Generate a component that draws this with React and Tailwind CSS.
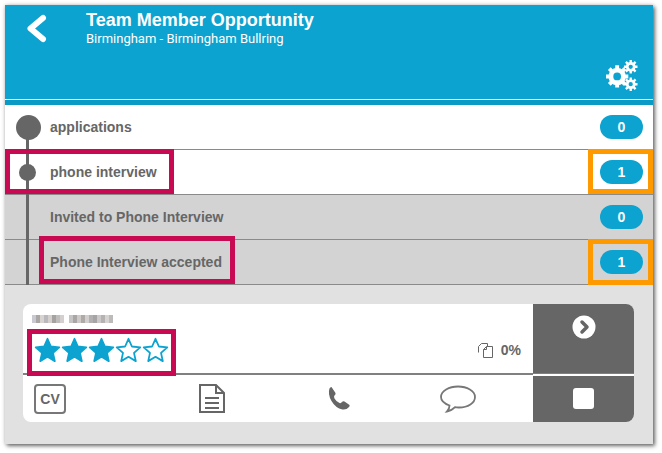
function Gears() {
  return (
    <svg width="34" height="31" viewBox="0 0 34 32" fill="none">
      <g stroke="#fff">
        <circle cx="12" cy="17" r="6.5" strokeWidth="5" />
        <path d="M12 5.500v4M12 24.500v4M.5 17h4M19.500 17h4M3.900 8.900l2.800 2.800M17.300 22.300l2.800 2.800M3.900 25.100l2.800-2.800M17.300 11.700l2.800-2.800" strokeWidth="4" />
        <circle cx="26" cy="7" r="3.600" strokeWidth="2.800" />
        <path d="M26 0v3M26 11v3M19 7h3M30 7h3M21 2l2 2M29 10l2 2M21 12l2-2M29 4l2-2" strokeWidth="2.400" />
        <circle cx="26" cy="25" r="3.600" strokeWidth="2.800" />
        <path d="M26 18v3M26 29v3M19 25h3M30 25h3M21 20l2 2M29 28l2 2M21 30l2-2M29 22l2-2" strokeWidth="2.400" />
      </g>
    </svg>
  );
}

function Star({ filled }) {
  return (
    <svg width="27" height="26" viewBox="0 0 27 26">
      <path
        d="M13.500 1.800l3.400 7.700 8.400.8-6.300 5.600 1.800 8.200-7.300-4.300-7.300 4.300 1.800-8.200-6.300-5.600 8.400-.8z"
        fill={filled ? "#0ca3d0" : "#fff"}
        stroke="#0ca3d0"
        strokeWidth="1.800"
        strokeLinejoin="round"
      />
    </svg>
  );
}

function Badge({ n }) {
  return (
    <span className="flex h-6 w-[43px] items-center justify-center rounded-full bg-[#0ca3d0] text-sm font-bold text-white">
      {n}
    </span>
  );
}

function Row({ label, n, sub }) {
  return (
    <div
      className={`flex h-[45px] items-center justify-between border-b border-[#8a8a8a] pl-[45px] pr-[10px] ${
        sub ? "bg-[#d3d3d3]" : "bg-white"
      }`}
    >
      <span className="text-sm font-bold text-[#666]">{label}</span>
      <Badge n={n} />
    </div>
  );
}

// the name is pixelated in the picture
const mosaicA = ["bg-[#c9c9cf]", "bg-[#a9a6a6]", "bg-[#d8d3cf]", "bg-[#b9b9bd]", "bg-[#d5d0ce]", "bg-[#a5a2a2]", "bg-[#c0bcbc]", "bg-[#d4d0cf]"];
const mosaicB = ["bg-[#c8c4c4]", "bg-[#a8a6a8]", "bg-[#cfcac6]", "bg-[#aeaaaa]", "bg-[#d2cfcc]", "bg-[#b2b0b0]", "bg-[#a6a4a4]", "bg-[#cdc9c9]", "bg-[#b4b2b2]", "bg-[#d6d3d0]", "bg-[#bcbaba]"];

export default function App() {
  return (
    <div className="h-[453px] w-[662px] bg-white pt-[5px] pl-[5px] font-['Liberation_Sans',sans-serif]">
      <div className="relative h-[439px] w-[648px] bg-[#e1e1e1] shadow-[2px_2px_4px_rgba(0,0,0,0.55),0_0_4px_rgba(0,0,0,0.2)]">
        {/* header */}
        <div className="flex h-[94px] bg-[#0ca3d0] pl-[21px] pt-[5px]">
          <svg width="22" height="30" viewBox="0 0 22 30" className="mt-[4px]">
            <path d="M17 4L4.500 14.500 17 25" fill="none" stroke="#fff" strokeWidth="6" strokeLinecap="round" strokeLinejoin="round" />
          </svg>
          <div className="ml-[38px] flex flex-col">
            <span className="text-lg leading-[20px] font-bold text-white">Team Member Opportunity</span>
            <span className="font-['Roboto',sans-serif] text-[13px] leading-[17px] text-white">
              Birmingham - Birmingham Bullring
            </span>
          </div>
          <div className="absolute top-[55px] right-[14px]">
            <Gears />
          </div>
        </div>
        <div className="h-px bg-white" />
        <div className="h-[5px] bg-[#0a9ac4]" />

        {/* stages */}
        <div className="relative">
          <Row label="applications" n="0" />
          <Row label="phone interview" n="1" />
          <Row label="Invited to Phone Interview" n="0" sub />
          <Row label="Phone Interview accepted" n="1" sub />
          <div className="absolute top-[20px] bottom-0 left-[21px] w-[3px] bg-[#666]" />
          <div className="absolute top-[10px] left-[11px] h-[25px] w-[25px] rounded-full bg-[#666]" />
          <div className="absolute top-[59px] left-[14px] h-[17px] w-[17px] rounded-full bg-[#666]" />

          {/* annotations */}
          <div className="absolute top-[44px] left-0 h-[45px] w-[169px] border-[5px] border-[#c70a52]" />
          <div className="absolute top-[131px] left-[34px] h-[48px] w-[196px] border-[5px] border-[#c70a52]" />
          <div className="absolute top-[44px] right-0 h-[45px] w-[65px] border-[5px] border-[#ff9900]" />
          <div className="absolute top-[134px] right-0 h-[46px] w-[65px] border-[5px] border-[#ff9900]" />
        </div>

        {/* candidate card */}
        <div className="absolute top-[299px] left-[18px] flex h-[118px] w-[611px] flex-col overflow-hidden rounded-lg bg-white">
          <div className="flex h-[71px] border-b-2 border-[#808080]">
            <div className="relative flex-1 pl-[11px]">
              <div className="mt-[11px] -ml-[2px] flex h-[8px] gap-[5px] blur-[0.6px]">
                <div className="flex">
                  {mosaicA.map((c, i) => (
                    <span key={i} className={`h-[8px] w-[4px] ${c}`} />
                  ))}
                </div>
                <div className="flex">
                  {mosaicB.map((c, i) => (
                    <span key={i} className={`h-[8px] w-[4px] ${c}`} />
                  ))}
                </div>
              </div>
              <div className="mt-[14px] flex">
                <Star filled />
                <Star filled />
                <Star filled />
                <Star />
                <Star />
              </div>
              <div className="absolute right-[12px] bottom-[13px] flex items-center gap-[8px]">
                <svg width="15" height="15" viewBox="0 0 15 15" fill="none" stroke="#666" strokeWidth="1">
                  <path d="M.5 9.500V3.500l3-3h6v3" />
                  <path d="M5.500 14.500V6.500l3-3h6v11z" fill="#fff" />
                  <path d="M8.500 3.500v3h-3" />
                </svg>
                <span className="text-sm font-bold text-[#666]">0%</span>
              </div>
            </div>
            <div className="flex w-[101px] justify-center bg-[#666] pt-[11px]">
              <svg width="24" height="24" viewBox="0 0 24 24">
                <circle cx="12" cy="12" r="11.500" fill="#fff" />
                <path d="M10 7l5 5-5 5" fill="none" stroke="#666" strokeWidth="3.500" strokeLinecap="round" strokeLinejoin="round" />
              </svg>
            </div>
          </div>
          <div className="flex flex-1">
            <div className="flex flex-1 items-center pl-[11px]">
              <span className="flex h-[30px] w-[32px] items-center justify-center rounded-[4px] border-2 border-[#777] text-sm font-bold text-[#666]">
                CV
              </span>
              <svg width="28" height="31" viewBox="0 0 28 31" fill="none" stroke="#666" strokeWidth="2" className="ml-[132px]">
                <path d="M2 2h16l8 8v19H2zM18 2v8h8M7 15h14M7 20h14M7 25h14" />
              </svg>
              <svg width="25" height="25" viewBox="1.500 0 23 25" fill="#666" className="ml-[101px]">
                <path d="M5 1L9 7Q9.500 8 8 9.500 7 10.500 8 12.500 10 16 13 17 14.500 17.500 15.500 16 16.500 15 18 15.500L23 19Q23.500 20 22.500 21 20 24 16 23.500 9 22 5 15 1 8 3 2.500 3.500 1 5 1Z" />
              </svg>
              <svg width="36" height="28" viewBox="0 0 36 28" fill="none" stroke="#777" strokeWidth="1.800" className="ml-[88px]">
                <path d="M18 1.500c9 0 17 4.500 17 10.500s-7 10.500-16 10.500c-1 0-3 0-4-.3-2 2-5 4-8 4.300 2-2 2.500-4 2.500-6C4 18.500 1 15.500 1 12 1 6 9 1.500 18 1.500z" />
              </svg>
            </div>
            <div className="flex w-[101px] items-center justify-center bg-[#666]">
              <span className="h-[21px] w-[21px] rounded-[3px] bg-white" />
            </div>
          </div>
        </div>
        {/* separator between the two dark cells */}
        <div className="absolute top-[369px] right-[19px] h-[2px] w-[101px] bg-white" />
        {/* annotation over stars */}
        <div className="absolute top-[324px] left-[22px] h-[47px] w-[149px] border-[5px] border-[#c70a52]" />
      </div>
    </div>
  );
}
